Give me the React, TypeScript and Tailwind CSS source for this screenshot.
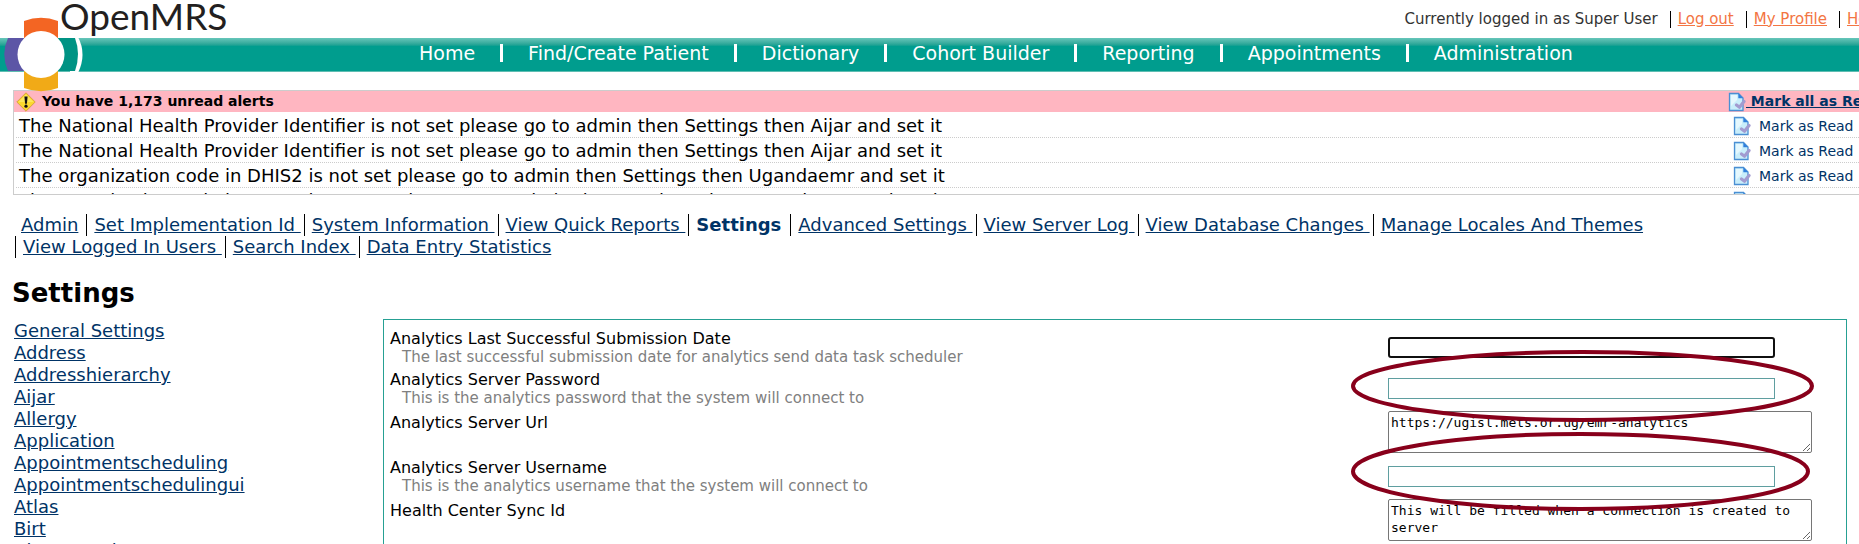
import type { ReactNode } from "react";

const NAV = ["Home", "Find/Create Patient", "Dictionary", "Cohort Builder", "Reporting", "Appointments", "Administration"];

const ALERTS = [
  "The National Health Provider Identifier is not set please go to admin then Settings then Aijar and set it",
  "The National Health Provider Identifier is not set please go to admin then Settings then Aijar and set it",
  "The organization code in DHIS2 is not set please go to admin then Settings then Ugandaemr and set it",
  "The organization code in DHIS2 is not set please go to admin then Settings then Ugandaemr and set it",
];

const ADMIN_ROWS = [
  [
    "Admin",
    "Set Implementation Id",
    "System Information",
    "View Quick Reports",
    "Settings",
    "Advanced Settings",
    "View Server Log",
    "View Database Changes",
    "Manage Locales And Themes",
  ],
  ["View Logged In Users", "Search Index", "Data Entry Statistics"],
];

const SECTIONS = [
  "General Settings",
  "Address",
  "Addresshierarchy",
  "Aijar",
  "Allergy",
  "Application",
  "Appointmentscheduling",
  "Appointmentschedulingui",
  "Atlas",
  "Birt",
  "Chartsearch",
];

function Logo() {
  return (
    <a href="#home" aria-label="OpenMRS home" className="absolute left-0 top-0 z-10 flex text-[#231f20]">
      <svg width="84" height="92" viewBox="0 0 84 92" aria-hidden="true">
        <path d="M70 37H78Q87 54 78 73H70Z" fill="#fff" />
        <path d="M24 21Q41 14.500 58 21V38H24Z" fill="#f36523" />
        <path d="M24 71V88Q41 94.500 58 88V71Z" fill="#f1aa17" />
        <path d="M25 38H8Q0.500 54 8 71H25Z" fill="#5c56a6" />
        <path d="M57 38H75Q81 54 75 71H57Z" fill="#009384" />
        <circle cx="41" cy="54.500" r="23.500" fill="#fff" />
      </svg>
      <span className="-ml-6 font-['Lato'] text-[37px] leading-8">OpenMRS</span>
    </a>
  );
}

function WarningIcon() {
  return (
    <svg width="20" height="20" viewBox="0 0 20 20" aria-hidden="true">
      <path d="M10 0.800L19.200 10L10 19.200L0.800 10Z" fill="#fbd92f" stroke="#d5a040" strokeWidth="1" strokeLinejoin="round" />
      <path d="M10 2.500L17.500 10H2.500Z" fill="#fff07a" opacity="0.6" />
      <path d="M8.400 4.500H11.600L10.900 11.800H9.100Z" fill="#111" />
      <circle cx="10" cy="14.200" r="1.600" fill="#111" />
    </svg>
  );
}

function ReadIcon() {
  return (
    <svg width="18" height="20" viewBox="0 0 18 20" className="shrink-0" aria-hidden="true">
      <path d="M1.500 1.500H10.500L15 6V18.500H1.500Z" fill="#c9eefb" stroke="#4a8fd3" strokeWidth="1.300" />
      <path d="M3 3H9V8L3 14Z" fill="#ecfaff" opacity="0.8" />
      <path d="M10.300 1.500L15 6.200H10.300Z" fill="#2f7fdc" />
      <path d="M8.500 13L11.500 15.200L16 9.500" fill="none" stroke="#a29bd0" strokeWidth="3.200" strokeLinecap="round" strokeLinejoin="round" />
    </svg>
  );
}

function Header() {
  return (
    <header className="relative">
      <div className="flex h-[38px] items-center justify-end text-[15px] leading-[17px] text-[#333]">
        <span className="pr-3">Currently logged in as Super User</span>
        {["Log out", "My Profile"].map((t) => (
          <span key={t} className="border-l border-black pl-[7px] pr-3">
            <a href="#user" className="text-[#f37543] underline">{t}</a>
          </span>
        ))}
        <span className="w-5 border-l border-black pl-[7px]">
          <a href="#help" className="text-[#f37543] underline">Help</a>
        </span>
      </div>
      <nav className="h-[34px] border-b border-[#5fbdb2] bg-[#009d8e] bg-linear-to-b from-[#66c6ba] from-0% to-[#009d8e] to-25% pl-[394px] text-[19px] leading-[18px] text-white">
        <ul className="flex pt-[6px]">
          {NAV.map((t, i) => (
            <li key={t} className={i ? "border-l-[3px] border-white px-[25px]" : "px-[25px]"}>
              <a href="#nav">{t}</a>
            </li>
          ))}
        </ul>
      </nav>
      <Logo />
    </header>
  );
}

function Alerts() {
  return (
    <section aria-label="Alerts" className="ml-[13px] mt-[18px] h-[105px] overflow-hidden border border-r-0 border-[#ccc]">
      <div className="flex h-[21px] items-center justify-between bg-[#ffb6c1] pl-[2px] text-[14px] font-bold">
        <span className="flex items-center gap-[6px]">
          <WarningIcon />
          You have 1,173 unread alerts
        </span>
        <a href="#read-all" className="flex w-[131px] items-center whitespace-pre text-[#036] underline">
          <ReadIcon />
          <span> Mark all as Read</span>
        </a>
      </div>
      <ul className="pl-[2px] pt-px">
        {ALERTS.map((t, i) => (
          <li key={i} className="flex h-[25px] items-center justify-between border-b border-dotted border-[#ccc] pl-[3px] pt-[2px] text-[18px] leading-5">
            {t}
            <a href="#read" className="flex w-[126px] items-center gap-2 text-[14px] text-[#036]">
              <ReadIcon />
              Mark as Read
            </a>
          </li>
        ))}
      </ul>
    </section>
  );
}

function AdminMenu() {
  return (
    <nav aria-label="Administration" className="ml-[15px] mt-[19px] text-[18px] leading-[22px] text-[#036]">
      {ADMIN_ROWS.map((row, r) => (
        <ul key={r} className="flex whitespace-pre">
          {row.map((t, i) => (
            <li key={t} className={r || i ? "border-l border-black pl-[7px] pr-[3px]" : "pl-[6px] pr-2"}>
              {t === "Settings" ? (
                <a href="#settings" aria-current="page" className="pr-[6px] font-bold">{t}</a>
              ) : (
                <a href="#admin" className="underline">{t === "Admin" || i === row.length - 1 ? t : t + " "}</a>
              )}
            </li>
          ))}
        </ul>
      ))}
    </nav>
  );
}

function Row({ id, label, hint, children }: { id: string; label: string; hint?: string; children: ReactNode }) {
  return (
    <div className="flex justify-between pb-[3px]">
      <div className={hint ? "pt-[2px]" : "pt-1"}>
        <label htmlFor={id} className="block text-[16px] leading-5 text-black">{label}</label>
        {hint && <p id={id + "-hint"} className="pl-3 text-[15px] leading-4 text-[#808080]">{hint}</p>}
      </div>
      <div className="relative w-[452px]">{children}</div>
    </div>
  );
}

function Ring({ className, width, height }: { className: string; width: number; height: number }) {
  return (
    <svg width={width} height={height} className={"pointer-events-none absolute z-10 max-w-none " + className} aria-hidden="true">
      <ellipse cx={width / 2} cy={height / 2} rx={width / 2 - 2} ry={height / 2 - 2} fill="none" stroke="#88001b" strokeWidth="4" />
    </svg>
  );
}

const INPUT = "mt-[10px] block h-[21px] w-[387px] border border-[#5f9ea0] bg-white px-1";
const AREA = "mt-[2px] block h-[42px] w-[424px] rounded-[2px] border border-[#767676] bg-white p-[2px] font-['DejaVu_Sans_Mono',monospace] text-[13px] leading-[17px]";

export default function App() {
  return (
    <div className="h-screen overflow-hidden bg-white font-['DejaVu_Sans',sans-serif] text-black">
      <Header />
      <Alerts />
      <AdminMenu />
      <h1 className="ml-3 mt-[19px] text-[26px] font-bold leading-8">Settings</h1>
      <div className="mr-3 mt-[10px] flex">
        <ul className="w-[383px] shrink-0 pl-[14px] pt-px text-[18px] leading-[22px] text-[#036]">
          {SECTIONS.map((t) => (
            <li key={t}>
              <a href="#section" className="underline">{t}</a>
            </li>
          ))}
        </ul>
        <form className="flex-1 border border-[#26a093] pb-8 pl-[6px] pr-[6px] pt-[7px]">
          <Row id="date" label="Analytics Last Successful Submission Date" hint="The last successful submission date for analytics send data task scheduler">
            <input id="date" aria-describedby="date-hint" className="mt-[10px] block h-[21px] w-[387px] rounded-[3px] border-2 border-[#101010] bg-white px-1 outline-none" />
          </Row>
          <Row id="password" label="Analytics Server Password" hint="This is the analytics password that the system will connect to">
            <input id="password" type="password" aria-describedby="password-hint" className={INPUT} />
            <Ring className="-left-[37px] -top-[18px]" width={463} height={72} />
          </Row>
          <Row id="url" label="Analytics Server Url">
            <textarea id="url" className={AREA} defaultValue="https://ugisl.mets.or.ug/emr-analytics" />
          </Row>
          <Row id="username" label="Analytics Server Username" hint="This is the analytics username that the system will connect to">
            <input id="username" aria-describedby="username-hint" className={INPUT} />
            <Ring className="-left-[37px] -top-[24px]" width={459} height={79} />
          </Row>
          <Row id="sync" label="Health Center Sync Id">
            <textarea id="sync" className={AREA} defaultValue="This will be filled when a connection is created to server" />
          </Row>
        </form>
      </div>
    </div>
  );
}
